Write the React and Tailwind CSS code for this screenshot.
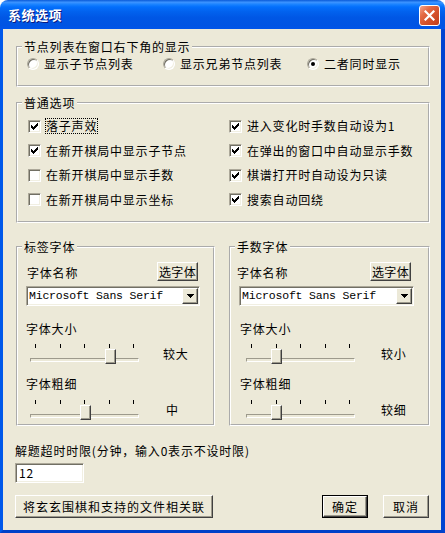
import React from 'react';

const cjk = "font-['Noto_Sans_CJK_SC','Noto_Sans',sans-serif]";
const raised = 'bg-[#ece9d8] border border-t-white border-l-white border-r-[#404040] border-b-[#404040] shadow-[inset_-1px_-1px_0_#9d9a8c]';
const sunken = 'border border-t-[#aca899] border-l-[#aca899] border-r-white border-b-white shadow-[inset_1px_1px_0_#716f64,inset_-1px_-1px_0_#f1efe2]';

const Group = ({ title, className, children }) => (
  <fieldset className={`border-2 border-white [--tw-border-style:groove] [border-style:groove] min-w-0 ${className}`}>
    <legend className="ml-[4px] px-[2px] leading-[14px]">{title}</legend>
    {children}
  </fieldset>
);

const Radio = ({ checked, children, className }) => (
  <div className={`flex items-center h-[16px] ${className}`}>
    <span className={`w-[12px] h-[12px] rounded-full bg-white flex items-center justify-center ${sunken}`}>
      {checked && <span className="w-[4px] h-[4px] rounded-full bg-black" />}
    </span>
    <span className="ml-[5px]">{children}</span>
  </div>
);

// classic 7x7 check mark, one 1x3 bar per column
const CHECK = [2, 3, 4, 3, 2, 1, 0];

const Check = ({ checked, focus, children }) => (
  <div className="flex items-center h-[24.5px]">
    <span className={`w-[13px] h-[13px] bg-white flex items-center justify-center ${sunken}`}>
      {checked && (
        <svg width="7" height="7" viewBox="0 0 7 7" shapeRendering="crispEdges">
          {CHECK.map((y, x) => <rect key={x} x={x} y={y} width="1" height="3" fill="#000" />)}
        </svg>
      )}
    </span>
    <span className={`ml-[4px] border leading-[14px] ${focus ? 'border-dotted border-black' : 'border-transparent'}`}>{children}</span>
  </div>
);

const Combo = ({ className }) => (
  <div className={`h-[20px] bg-white flex items-center ${sunken} ${className}`}>
    <span className="flex-1 pl-[2px] font-['Liberation_Mono',monospace] text-[11.5px] tracking-[-0.2px] leading-[16px] whitespace-nowrap overflow-hidden">
      Microsoft Sans Serif
    </span>
    <span className={`w-[16px] h-[16px] mr-px flex items-center justify-center ${raised}`}>
      <svg width="7" height="4" viewBox="0 0 7 4" shapeRendering="crispEdges">
        <rect x="0" y="0" width="7" height="1" />
        <rect x="1" y="1" width="5" height="1" />
        <rect x="2" y="2" width="3" height="1" />
        <rect x="3" y="3" width="1" height="1" />
      </svg>
    </span>
  </div>
);

const Slider = ({ pos }) => (
  <div className="relative w-[109px] h-[24px] shrink-0">
    <div className="flex justify-between px-[5px] pt-[2px]">
      {[0, 1, 2, 3, 4].map(i => <span key={i} className="w-px h-[4px] bg-black" />)}
    </div>
    <div className="absolute left-0 right-0 top-[16px] h-[4px] border border-t-[#9d9a8c] border-l-[#9d9a8c] border-r-white border-b-white bg-[#ece9d8]" />
    <div
      className={`absolute top-[7px] w-[11px] h-[15px] ${raised}`}
      style={{ left: pos * 25 }}
    />
  </div>
);

const FontGroup = ({ title, className, pad, size, weight }) => (
  <Group title={title} className={className}>
    <div className={`flex items-center justify-between pt-[8px] ${pad.row}`}>
      <span className="pt-[3px] leading-[16px]">字体名称</span>
      <button className={`w-[41px] h-[19px] leading-[15px] tracking-[0.3px] ${raised}`}>选字体</button>
    </div>
    <Combo className={`mt-[5px] ml-[8px] ${pad.combo}`} />
    <div className={`mt-[15px] leading-[16px] ${pad.label}`}>字体大小</div>
    <div className={`mt-[5px] flex items-center ${pad.slider}`}>
      <Slider pos={size.pos} />
      <span className={size.ml}>{size.text}</span>
    </div>
    <div className={`mt-[10px] leading-[16px] ${pad.label}`}>字体粗细</div>
    <div className={`mt-[6px] pb-[2px] flex items-center ${pad.slider}`}>
      <Slider pos={weight.pos} />
      <span className={weight.ml}>{weight.text}</span>
    </div>
  </Group>
);

export default function App() {
  return (
    <div className={`w-[445px] h-[533px] flex flex-col text-[12px] tracking-[0.8px] text-black ${cjk}`}>
      {/* title bar */}
      <div className="h-[29px] shrink-0 rounded-t-[8px] flex items-center justify-between pl-[8px] pr-[5px] bg-[linear-gradient(to_bottom,#0a5ad8_0%,#3b93ff_8%,#1781ff_16%,#036ffc_24%,#0262ee_40%,#0057e5_60%,#0054e3_88%,#0055eb_100%)]">
        <span className="text-white font-bold text-[13px] tracking-[0.5px] [text-shadow:1px_1px_0_#0a1a80]">系统选项</span>
        <span className="mt-[2px] w-[21px] h-[21px] rounded-[3px] border border-white flex items-center justify-center bg-[linear-gradient(135deg,#f4a58e_0%,#e46a44_30%,#d4502a_60%,#c03d1a_100%)]">
          <svg width="11" height="11" viewBox="0 0 11 11">
            <path d="M1.5 1.5 L9.5 9.5 M9.5 1.5 L1.5 9.5" stroke="#fff" strokeWidth="2.2" strokeLinecap="square" />
          </svg>
        </span>
      </div>

      {/* client area */}
      <div className="flex-1 flex flex-col bg-[#ece9d8] border-l-[3px] border-r-[4px] border-b-[3px] border-l-[#0058ea] border-r-[#0044d2] border-b-[#0040c8] pl-[13px] pr-[11px]">
        <Group title="节点列表在窗口右下角的显示" className="mt-[11px]">
          <div className="flex pl-[9px] pt-[2px] pb-[13px]">
            <Radio className="w-[136px]">显示子节点列表</Radio>
            <Radio className="w-[144px]">显示兄弟节点列表</Radio>
            <Radio checked>二者同时显示</Radio>
          </div>
        </Group>

        <Group title="普通选项" className="mt-[9px]">
          <div className="flex pt-[4px] pb-[9px]">
            <div className="w-[211px] pl-[10px]">
              <Check checked focus>落子声效</Check>
              <Check checked>在新开棋局中显示子节点</Check>
              <Check>在新开棋局中显示手数</Check>
              <Check>在新开棋局中显示坐标</Check>
            </div>
            <div>
              <Check checked>进入变化时手数自动设为1</Check>
              <Check checked>在弹出的窗口中自动显示手数</Check>
              <Check checked>棋谱打开时自动设为只读</Check>
              <Check checked>搜索自动回绕</Check>
            </div>
          </div>
        </Group>

        <div className="mt-[17px] flex gap-[14px]">
          <FontGroup
            title="标签字体"
            className="w-[199px]"
            pad={{ row: 'pl-[9px] pr-[15px]', combo: 'w-[174px]', label: 'pl-[8px]', slider: 'pl-[12px]' }}
            size={{ pos: 3, text: '较大', ml: 'ml-[24px]' }}
            weight={{ pos: 2, text: '中', ml: 'ml-[27px]' }}
          />
          <FontGroup
            title="手数字体"
            className="w-[201px]"
            pad={{ row: 'pl-[6px] pr-[17px]', combo: 'w-[175px]', label: 'pl-[9px]', slider: 'pl-[15px]' }}
            size={{ pos: 1, text: '较小', ml: 'ml-[26px]' }}
            weight={{ pos: 1, text: '较细', ml: 'ml-[26px]' }}
          />
        </div>

        <div className="mt-[17px] ml-[-1px] leading-[16px] whitespace-nowrap">解题超时时限(分钟，输入0表示不设时限)</div>
        <div className={`mt-[4px] ml-[-1px] w-[69px] h-[20px] bg-white pl-[3px] leading-[17px] ${sunken}`}>12</div>

        <div className="mt-[12px] flex items-center">
          <button className={`ml-[-1px] w-[198px] h-[23px] leading-[19px] tracking-[1px] ${raised}`}>将玄玄围棋和支持的文件相关联</button>
          <div className="flex-1" />
          <div className="border border-black">
            <button className={`block w-[44px] h-[21px] leading-[17px] tracking-[1px] ${raised}`}>确定</button>
          </div>
          <button className={`ml-[15px] mr-px w-[46px] h-[23px] leading-[19px] tracking-[1px] ${raised}`}>取消</button>
        </div>
      </div>
    </div>
  );
}
